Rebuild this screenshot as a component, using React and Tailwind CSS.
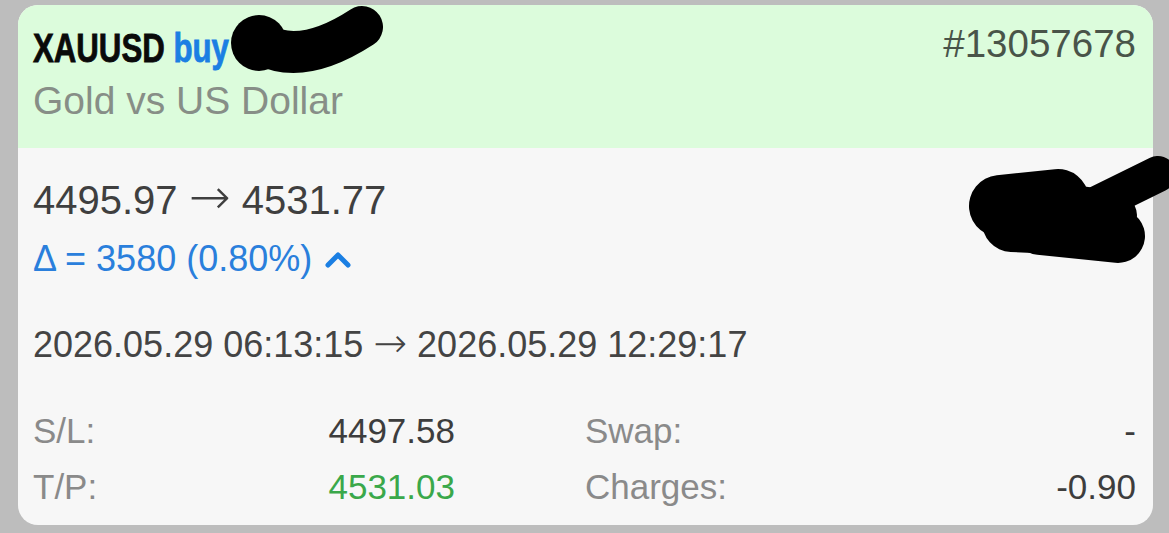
import React from "react";

const rows = [
  { a: "S/L:", av: "4497.58", avc: "text-[#3d3d3d]", b: "Swap:", bv: "-" },
  { a: "T/P:", av: "4531.03", avc: "text-[#3aa84a]", b: "Charges:", bv: "-0.90" },
];

function Arrow({ big }) {
  return (
    <span
      className={
        big
          ? "font-['DejaVu_Sans',sans-serif] text-[1.25em] leading-[30px] font-extralight"
          : "font-['DejaVu_Sans',sans-serif] text-[1.12em] leading-[30px] font-extralight"
      }
    >
      →
    </span>
  );
}

function Scribbles() {
  // redaction marks drawn over the screenshot
  return (
    <svg
      className="absolute inset-0 pointer-events-none"
      width="1169"
      height="533"
      viewBox="0 0 1169 533"
    >
      <g stroke="#000" strokeLinecap="round" strokeLinejoin="round" fill="none">
        <path d="M262 44 Q302 66 362 27" strokeWidth="42" />
        <path d="M1000 206 L1058 200" strokeWidth="62" />
        <path d="M1012 222 L1100 226" strokeWidth="60" />
        <path d="M1040 228 L1118 236" strokeWidth="54" />
        <path d="M1060 208 L1112 216" strokeWidth="50" />
        <path d="M1095 205 L1158 174" strokeWidth="36" />
      </g>
      <circle cx="259" cy="43" r="28" fill="#000" />
    </svg>
  );
}

export default function App() {
  return (
    <div className="relative w-full h-[533px] overflow-hidden bg-[#bdbdbd] pt-[5px] pl-[18px] pr-[16px] font-['Liberation_Sans',Arial,sans-serif]">
      <div className="rounded-[20px] overflow-hidden bg-[#f7f7f7]">
        {/* header */}
        <div className="h-[143px] bg-[#dcfcdc] pl-[15px] pr-[17px] pt-[21px] flex justify-between items-start">
          <div>
            <div className="h-[44px] leading-[44px] text-[40px] font-bold whitespace-nowrap origin-left scale-x-[0.78] [-webkit-text-stroke:0.8px_currentColor]">
              <span className="text-[#0a0a0a]">XAUUSD</span>{" "}
              <span className="text-[#1b7fe3]">buy</span>
            </div>
            <div className="mt-[10px] h-[42px] leading-[42px] text-[39px] text-[#878e87] whitespace-nowrap">
              Gold vs US Dollar
            </div>
          </div>
          <div className="-mt-[3px] leading-[42px] text-[38.5px] text-[#495449]">#13057678</div>
        </div>

        {/* body */}
        <div className="pl-[15px] pr-[17px] pt-[30px] pb-[18px]">
          <div className="h-[44px] leading-[44px] text-[40px] text-[#3f3f3f] whitespace-nowrap">
            4495.97 <Arrow big /> 4531.77
          </div>
          <div className="mt-[17px] flex items-center leading-[40px] text-[36px] text-[#2a7fdc] whitespace-nowrap">
            <span>Δ = 3580 (0.80%)</span>
            <svg width="26" height="18" viewBox="0 0 26 18" className="ml-[13px]">
              <path
                d="M3 15 L13 5 L23 15"
                stroke="#1b7fe3"
                strokeWidth="5"
                strokeLinecap="round"
                strokeLinejoin="round"
                fill="none"
              />
            </svg>
          </div>
          <div className="mt-[46px] h-[40px] leading-[40px] text-[36px] text-[#444] whitespace-nowrap">
            2026.05.29 06:13:15 <Arrow /> 2026.05.29 12:29:17
          </div>
          <div className="mt-[46px] flex flex-col gap-[16px]">
            {rows.map((r) => (
              <div key={r.a} className="grid grid-cols-[422px_1fr] gap-x-[130px] leading-[40px] text-[35px]">
                <div className="flex justify-between">
                  <span className="text-[#8a8a8a]">{r.a}</span>
                  <span className={r.avc}>{r.av}</span>
                </div>
                <div className="flex justify-between">
                  <span className="text-[#8a8a8a]">{r.b}</span>
                  <span className="text-[#3d3d3d]">{r.bv}</span>
                </div>
              </div>
            ))}
          </div>
        </div>
      </div>
      <Scribbles />
    </div>
  );
}
